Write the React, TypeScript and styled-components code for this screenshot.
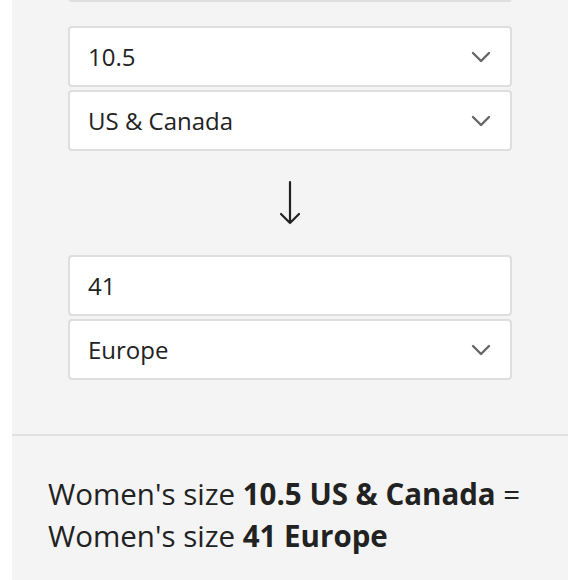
import styled, { createGlobalStyle } from 'styled-components';

const GlobalStyle = createGlobalStyle`
  body {
    margin: 0;
    background: #fff;
    font-family: "Open Sans", "Noto Sans", sans-serif;
    color: #222;
  }
`;

const Panel = styled.div`
  margin: 0 12px;
  background: #f4f4f4;
  height: 580px;
  overflow: hidden;
`;

const Form = styled.div`
  display: flex;
  flex-direction: column;
  padding: 0 56px 54px;
  border-bottom: 2px solid #e2e2e2;
`;

const Group = styled.div<{ $offset?: number }>`
  display: flex;
  flex-direction: column;
  gap: 3px;
  margin-top: ${p => p.$offset ?? 0}px;
`;

const Field = styled.div`
  display: flex;
  align-items: center;
  justify-content: space-between;
  height: 57px;
  padding: 0 18px 0 18px;
  background: #fff;
  border: 2px solid #dedede;
  border-radius: 4px;
  font-size: 24px;
  color: #222;
`;

const Chevron = () => (
  <svg width="22" height="14" viewBox="0 0 22 14" fill="none">
    <path d="M3 3 L11 11 L19 3" stroke="#666" strokeWidth="2.4" strokeLinecap="round" strokeLinejoin="round" />
  </svg>
);

const ArrowRow = styled.div`
  display: flex;
  justify-content: center;
  align-items: center;
  height: 104px;
`;

const Result = styled.p`
  margin: 0;
  padding: 37px 36px 0;
  font-size: 29.5px;
  line-height: 42px;
  color: #222;

  b {
    font-weight: 700;
  }
`;

const Select = ({ value }: { value: string }) => (
  <Field>
    <span>{value}</span>
    <Chevron />
  </Field>
);

const App = () => (
  <>
    <GlobalStyle />
    <Panel>
      <Form>
        <Group $offset={-59}>
          <Field />
        </Group>
        <Group $offset={24}>
          <Select value="10.5" />
          <Select value="US & Canada" />
        </Group>
        <ArrowRow>
          <svg width="24" height="46" viewBox="0 0 24 46" fill="none">
            <path d="M12 2 V43 M3 34 L12 43 L21 34" stroke="#222" strokeWidth="2.2" strokeLinecap="round" strokeLinejoin="round" />
          </svg>
        </ArrowRow>
        <Group>
          <Field>
            <span>41</span>
          </Field>
          <Select value="Europe" />
        </Group>
      </Form>
      <Result>
        Women's size <b>10.5 US &amp; Canada</b> = Women's size <b>41 Europe</b>
      </Result>
    </Panel>
  </>
);

export default App;
